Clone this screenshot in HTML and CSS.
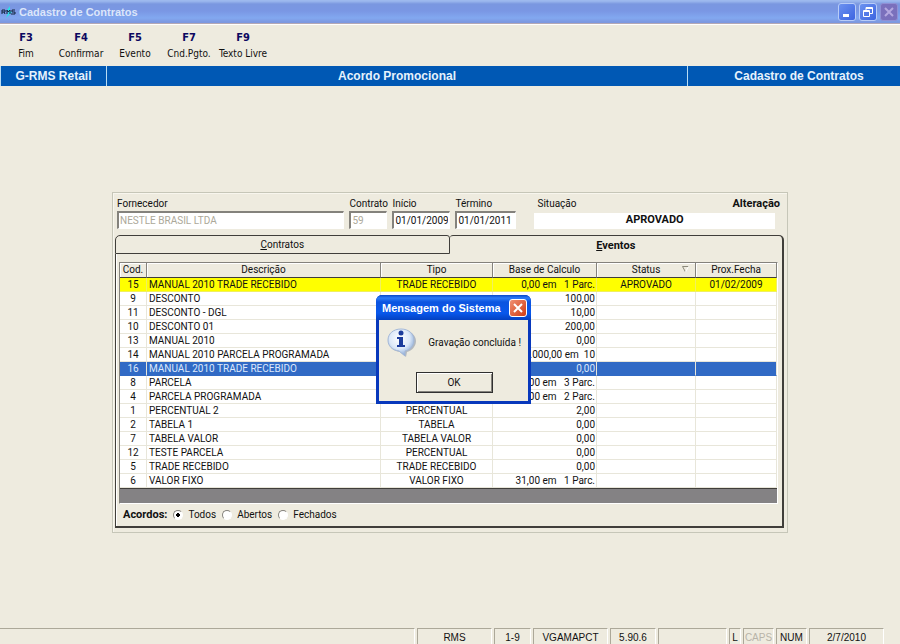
FILE: index.html
```html
<!DOCTYPE html>
<html lang="pt-BR">
<head>
  <meta charset="UTF-8">
  <meta name="viewport" content="width=device-width, initial-scale=1.0">
  <title>Cadastro de Contratos</title>
  <link rel="stylesheet" href="styles.css">
</head>
<body>
  <header class="titlebar">
    <svg class="logo" width="15" height="12" viewBox="0 0 15 12">
      <path d="M9 0 L6 4 L8 5 L5 12 L11 6 L9 5 Z" fill="#2ce0e8"/>
      <path d="M1 8 V4 H4 V6 H1 M3 6 L4 8 M6 8 V4 L7 6 L9 4 V8 M14 4 H11 V6 H14 V8 H10" fill="none" stroke="#12243c" stroke-width="1"/>
    </svg>
    <h1>Cadastro de Contratos</h1>
    <div class="winbuttons">
      <button class="win" aria-label="Minimizar"><svg width="16" height="16"><rect x="4" y="10" width="6" height="3" fill="#fff"/></svg></button>
      <button class="win" aria-label="Restaurar"><svg width="16" height="16" fill="none" stroke="#fff"><path d="M6 6 V3.5 H12.5 V9.5 H10 M6 4.5 H12"/><path d="M3.5 6.5 H9.5 V12.5 H3.5 Z M3 7.5 H10"/></svg></button>
      <button class="win off" aria-label="Fechar"><svg width="16" height="16"><path d="M4 4 L12 12 M12 4 L4 12" stroke="#b4a8e0" stroke-width="2"/></svg></button>
    </div>
  </header>

  <nav class="toolbar">
    <button><b>F3</b>Fim</button>
    <button><b>F4</b>Confirmar</button>
    <button><b>F5</b>Evento</button>
    <button><b>F7</b>Cnd.Pgto.</button>
    <button><b>F9</b>Texto Livre</button>
  </nav>

  <div class="banner">
    <span>G-RMS Retail</span>
    <span>Acordo Promocional</span>
    <span>Cadastro de Contratos</span>
  </div>

  <main class="panel">
    <form class="fields">
      <div class="field">
        <label for="fornecedor">Fornecedor</label>
        <input type="text" id="fornecedor" value="NESTLE BRASIL LTDA" disabled>
      </div>
      <div class="field">
        <label for="contrato">Contrato</label>
        <input type="text" id="contrato" value="59" disabled>
      </div>
      <div class="field">
        <label for="inicio">Início</label>
        <input type="text" id="inicio" value="01/01/2009">
      </div>
      <div class="field">
        <label for="termino">Término</label>
        <input type="text" id="termino" value="01/01/2011">
      </div>
      <div class="field situacao">
        <div class="labels"><label for="situacao">Situação</label><strong>Alteração</strong></div>
        <output id="situacao">APROVADO</output>
      </div>
    </form>

    <div class="tabs">
      <button class="tab"><span><u>C</u>ontratos</span></button>
      <button class="tab active"><span><u>E</u>ventos</span></button>
    </div>
    <section class="tabpage">
      <div class="gridbox">
        <table>
          <colgroup>
            <col class="c-cod"><col><col class="c-tipo"><col class="c-base"><col class="c-status"><col class="c-prox">
          </colgroup>
          <thead>
            <tr><th>Cod.</th><th>Descrição</th><th>Tipo</th><th>Base de Calculo</th><th class="sorted">Status<svg width="7" height="7"><path d="M6.5 0.5 H0.5 L3.5 6" fill="none" stroke="#8c8a7c"/><path d="M3.5 6 L6.5 0.5" stroke="#fff"/></svg></th><th>Prox.Fecha</th></tr>
          </thead>
          <tbody>
            <tr class="approved"><td>15</td><td>MANUAL 2010 TRADE RECEBIDO</td><td>TRADE RECEBIDO</td><td>0,00 em   1 Parc.</td><td>APROVADO</td><td>01/02/2009</td></tr>
            <tr><td>9</td><td>DESCONTO</td><td></td><td>100,00</td><td></td><td></td></tr>
            <tr><td>11</td><td>DESCONTO - DGL</td><td></td><td>10,00</td><td></td><td></td></tr>
            <tr><td>10</td><td>DESCONTO 01</td><td></td><td>200,00</td><td></td><td></td></tr>
            <tr><td>13</td><td>MANUAL 2010</td><td></td><td>0,00</td><td></td><td></td></tr>
            <tr><td>14</td><td>MANUAL 2010 PARCELA PROGRAMADA</td><td></td><td>10.000,00 em  10</td><td></td><td></td></tr>
            <tr class="selected"><td>16</td><td>MANUAL 2010 TRADE RECEBIDO</td><td></td><td>0,00</td><td></td><td></td></tr>
            <tr><td>8</td><td>PARCELA</td><td></td><td>0,00 em   3 Parc.</td><td></td><td></td></tr>
            <tr><td>4</td><td>PARCELA PROGRAMADA</td><td></td><td>0,00 em   2 Parc.</td><td></td><td></td></tr>
            <tr><td>1</td><td>PERCENTUAL 2</td><td>PERCENTUAL</td><td>2,00</td><td></td><td></td></tr>
            <tr><td>2</td><td>TABELA 1</td><td>TABELA</td><td>0,00</td><td></td><td></td></tr>
            <tr><td>7</td><td>TABELA VALOR</td><td>TABELA VALOR</td><td>0,00</td><td></td><td></td></tr>
            <tr><td>12</td><td>TESTE PARCELA</td><td>PERCENTUAL</td><td>0,00</td><td></td><td></td></tr>
            <tr><td>5</td><td>TRADE RECEBIDO</td><td>TRADE RECEBIDO</td><td>0,00</td><td></td><td></td></tr>
            <tr><td>6</td><td>VALOR FIXO</td><td>VALOR FIXO</td><td>31,00 em   1 Parc.</td><td></td><td></td></tr>
          </tbody>
        </table>
      </div>
      <div class="filter">
        <strong>Acordos:</strong>
        <label><input type="radio" name="acordos" checked>Todos</label>
        <label><input type="radio" name="acordos">Abertos</label>
        <label><input type="radio" name="acordos">Fechados</label>
      </div>
    </section>
  </main>

  <footer class="statusbar">
    <span class="msg"></span>
    <span class="wide">RMS</span>
    <span class="small">1-9</span>
    <span class="wide">VGAMAPCT</span>
    <span class="medium">5.90.6</span>
    <span class="blank"></span>
    <span class="key">L</span>
    <span class="lock dim">CAPS</span>
    <span class="lock">NUM</span>
    <span class="wide">2/7/2010</span>
  </footer>

  <div class="dialog" role="dialog" aria-labelledby="dlgTitle">
    <div class="dialog-title">
      <h2 id="dlgTitle">Mensagem do Sistema</h2>
      <button class="close" aria-label="Fechar"><svg width="16" height="16"><path d="M4 4 L12 12 M12 4 L4 12" stroke="#fff" stroke-width="2"/></svg></button>
    </div>
    <div class="dialog-body">
      <div class="message">
        <svg width="30" height="30" viewBox="0 0 30 30">
          <defs>
            <radialGradient id="bubble" cx="0.45" cy="0.35" r="0.65">
              <stop offset="0" stop-color="#fff"/>
              <stop offset="0.6" stop-color="#dce8f8"/>
              <stop offset="1" stop-color="#86a6d4"/>
            </radialGradient>
          </defs>
          <path d="M15 2 C23 2 29 7 29 13 C29 19 24 23 20 24 L19 29 L13 24 C6 23 2 19 2 13 C2 7 7 2 15 2 Z" fill="#8c96a8" opacity="0.6"/>
          <path d="M14 1 C22 1 27 6 27 12 C27 18 23 22 18 23 L18 28 L12 23 C5 22 1 18 1 12 C1 6 6 1 14 1 Z" fill="url(#bubble)" stroke="#a4b8d8"/>
          <circle cx="14" cy="5" r="2.5" fill="#1c3c9c"/>
          <path d="M10 9 H16 V17 H18 V19 H10 V17 H12 V11 H10 Z" fill="#1c3c9c"/>
        </svg>
        <p>Gravação concluída !</p>
      </div>
      <button class="ok">OK</button>
    </div>
  </div>
</body>
</html>
```
FILE: styles.css
```css
* {
  box-sizing: border-box;
}
body {
  margin: 0;
  min-height: 100vh;
  display: flex;
  flex-direction: column;
  background: #eeebdf;
  color: #111;
  font: 10px/14px Roboto, "Liberation Sans", sans-serif;
}
button, input {
  font: inherit;
  color: inherit;
  margin: 0;
}
h1, h2, p {
  margin: 0;
}

/* title bar */
.titlebar {
  display: flex;
  align-items: center;
  height: 24px;
  padding: 0 2px 0 1px;
  border-bottom: 1px solid #b4a8b4;
  background: linear-gradient(#9db9ee 0, #9db9ee 1px, #7a97e0 4px, #7a97e4 11px, #82a8f0 18px, #7c98e0 22px);
}
.titlebar h1 {
  flex: 1;
  margin-left: 3px;
  font: bold 11px/14px "Liberation Sans", sans-serif;
  color: #dce6fa;
}
.winbuttons {
  display: flex;
  gap: 3px;
}
.win {
  display: flex;
  width: 18px;
  height: 18px;
  padding: 0;
  border: 1px solid #b8ccf8;
  border-radius: 3px;
  background: linear-gradient(135deg, #6c92f0, #3c64e0);
}
.win.off {
  border-color: #9090d4;
  background: #7a70bc;
}

/* function keys */
.toolbar {
  display: flex;
  height: 42px;
  border-top: 1px solid #fff;
}
.toolbar button {
  flex: 0 0 54px;
  margin-left: -1px;
  margin-right: 1px;
  padding: 1px 0 0;
  border: none;
  background: none;
  font: 10px/16px "DejaVu Sans Condensed", "DejaVu Sans", sans-serif;
  white-space: nowrap;
}
.toolbar button + button {
  margin-right: 0;
  margin-left: 0;
}
.toolbar b {
  display: block;
  font-size: 11px;
  color: #0c0860;
}

.banner {
  display: flex;
  height: 20px;
  background: #0058b4;
  color: #e6f2fc;
  font: bold 12px/20px "Liberation Sans", sans-serif;
  text-align: center;
}
.banner span {
  border-left: 1px solid #b8dcf4;
  flex: 0 1 106px;
}
.banner span:nth-child(2) {
  flex: 1;
}
.banner span:nth-child(3) {
  flex: 0 1 213px;
  padding-left: 10px;
}

/* contract panel */
.panel {
  margin: 106px 112px 0;
  padding: 4px 3px 4px 2px;
  border: 1px solid #c6c6b8;
  box-shadow: inset 1px 1px #f8f6ee;
}
.fields {
  display: flex;
  gap: 5px;
  padding: 0 9px 0 2px;
}
.field {
  flex: 0 0 61px;
  min-width: 0;
}
.field:nth-child(1) {
  flex: 227 1 0;
}
.field:nth-child(2) {
  flex-basis: 38px;
}
.field:nth-child(3) {
  flex-basis: 58px;
}
.field label {
  display: block;
  white-space: nowrap;
}
.field input {
  display: block;
  width: 100%;
  height: 18px;
  padding: 0 1px;
  border: 1px solid #fff;
  border-top: 2px solid #84827c;
  border-left: 2px solid #84827c;
  background: #fff;
}
.field input:disabled {
  color: #aca899;
}
.field.situacao {
  flex: 240 1 0;
  margin-left: 13px;
}
.labels {
  display: flex;
  justify-content: space-between;
  margin-right: -5px;
  padding-left: 3px;
}
.situacao output {
  display: block;
  margin-top: 2px;
  height: 16px;
  background: #fff;
  font-weight: bold;
  text-align: center;
}
strong, output {
  font-size: 11px;
}

/* tabs */
.tabs {
  display: flex;
  margin-top: 6px;
}
.tab {
  flex: 1;
  height: 19px;
  padding: 0;
  border: 1px solid #403e3a;
  border-radius: 5px 3px 0 0;
  background: none;
  line-height: 17px;
}
.tab.active {
  border-bottom: none;
  border-left: none;
  border-right-width: 2px;
  border-radius: 3px 5px 0 0;
  font-size: 11px;
  font-weight: bold;
}
.tabpage {
  padding: 8px 4px 4px 3px;
  border: 1px solid #403e3a;
  border-width: 0 2px 2px 1px;
  box-shadow: inset 1px 0 #fff;
}
.gridbox {
  padding-bottom: 14px;
  border: 1px solid #84827c;
  border-right-color: #fff;
  border-bottom-color: #fff;
  background: #848284;
}
table {
  width: 100%;
  table-layout: fixed;
  border-collapse: separate;
  border-spacing: 0;
  background: #fff;
  border-bottom: 1px solid #403e3a;
}
.c-cod { width: 27px; }
.c-tipo { width: 112px; }
.c-base { width: 104px; }
.c-status { width: 99px; }
.c-prox { width: 81px; }
th {
  height: 15px;
  padding: 0;
  border-right: 1px solid #84827c;
  border-bottom: 1px solid #403e3a;
  background: #eeebdf;
  box-shadow: inset 1px 1px #fff;
  font-weight: normal;
}
.sorted svg {
  float: right;
  margin: 3px 6px 0 -13px;
}
td {
  height: 14px;
  padding: 0 2px;
  border-right: 1px solid #e8e6da;
  border-bottom: 1px solid #e8e6da;
  line-height: 13px;
  text-align: center;
  white-space: pre;
}
td:nth-child(2) {
  text-align: left;
}
td:nth-child(4) {
  padding-right: 1px;
  text-align: right;
}
.approved td {
  background: #ff0;
  border-color: #f0f060;
}
.selected td {
  background: #316ac5;
  border-bottom-color: #316ac5;
  color: #dce8fc;
}

.filter {
  display: flex;
  align-items: center;
  gap: 6px;
  padding: 4px 4px 0;
}
.filter label {
  display: flex;
  align-items: center;
  gap: 5px;
}
.filter input {
  appearance: none;
  width: 10px;
  height: 10px;
  border: 1px solid #fff;
  border-top-color: #84827c;
  border-left-color: #84827c;
  border-radius: 50%;
  background: #fff;
}
.filter input:checked {
  background: radial-gradient(circle, #000 0 2px, #fff 2px);
}

/* status bar */
.statusbar {
  display: flex;
  gap: 2px;
  margin-top: auto;
  padding-right: 16px;
  height: 16px;
  font-family: "Liberation Sans", sans-serif;
  text-align: center;
}
.statusbar span {
  padding-top: 2px;
  border-top: 1px solid #aca899;
  border-left: 1px solid #aca899;
  border-right: 1px solid #fff;
}
.statusbar .msg { flex: 1; border-left: none; }
.statusbar .wide { width: 75px; }
.statusbar .small { width: 37px; }
.statusbar .medium { width: 46px; }
.statusbar .blank { width: 69px; }
.statusbar .key { width: 12px; }
.statusbar .lock { width: 31px; }
.statusbar .dim { color: #b8b4a8; }

/* message box */
.dialog {
  position: absolute;
  top: 295px;
  left: 376px;
  width: 155px;
  border: 3px solid #0838bc;
  border-top: none;
  border-radius: 6px 6px 0 0;
  background: #0838bc;
}
.dialog-title {
  display: flex;
  align-items: center;
  justify-content: space-between;
  height: 25px;
  margin: 0 -3px;
  padding: 0 4px 0 6px;
  border-radius: 6px 6px 0 0;
  background: linear-gradient(#0848c8, #2c7cf8 3px, #0c54e0 7px, #0858ec 18px, #0440c0);
}
.dialog-title h2 {
  font: bold 11px/14px "Liberation Sans", sans-serif;
  color: #fff;
  white-space: nowrap;
}
.close {
  display: flex;
  width: 18px;
  height: 18px;
  padding: 0;
  border: 1px solid #fff;
  border-radius: 3px;
  background: linear-gradient(135deg, #f09074, #d03c14);
}
.dialog-body {
  padding: 8px 7px 8px 8px;
  background: #eeebdf;
}
.message {
  display: flex;
  align-items: center;
  justify-content: space-between;
  white-space: nowrap;
}
.ok {
  display: block;
  width: 77px;
  height: 21px;
  margin: 14px auto 0;
  padding: 0;
  border: 1px solid #303030;
  background: #eeebdf;
  box-shadow: inset 1px 1px #fff, inset -1px -1px #84827c;
}
```
